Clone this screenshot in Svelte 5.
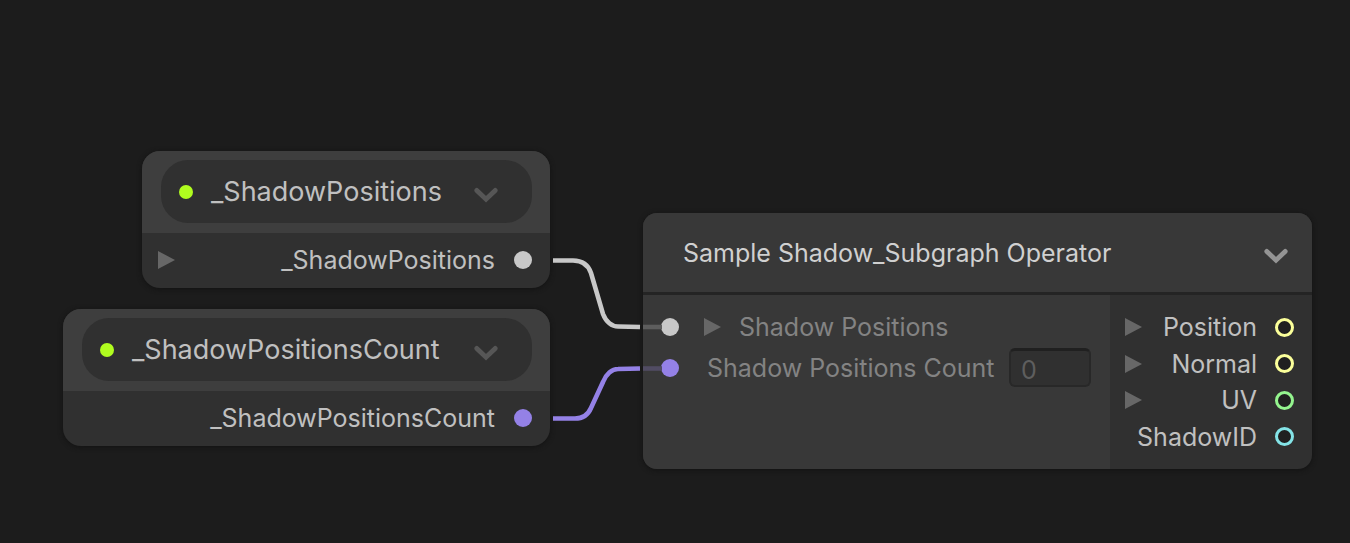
<script>
  const parameters = [
    { name: '_ShadowPositions', x: 142, y: 151, width: 408, expandable: true, color: '#c8c8c8' },
    { name: '_ShadowPositionsCount', x: 63, y: 309, width: 487, expandable: false, color: '#9481e6' }
  ];
  const outputs = [
    { name: 'Position', color: '#fbff9a', expandable: true },
    { name: 'Normal', color: '#fbff9a', expandable: true },
    { name: 'UV', color: '#94f48e', expandable: true },
    { name: 'ShadowID', color: '#84e4e7', expandable: false }
  ];
  let count = $state('0');
</script>

{#snippet expander(label)}
  <button class="expander" aria-label={label}>
    <svg width="17" height="18" viewBox="0 0 17 18"><path d="M0 0 17 9 0 18Z" fill="#676767" /></svg>
  </button>
{/snippet}

{#snippet chevron()}
  <svg width="24" height="16" viewBox="0 0 24 16">
    <path d="M2.8 3.4 12 12.2 21.2 3.4" fill="none" stroke="currentColor" stroke-width="4.8" stroke-linecap="round" />
  </svg>
{/snippet}

<main>
  {#each parameters as p}
    <section class="node parameter" style="left:{p.x}px; top:{p.y}px; width:{p.width}px">
      <header>
        <div class="pill">
          <span class="exposed"></span>
          <span class="name">{p.name}</span>
          <button class="collapse" aria-label="Collapse {p.name}">{@render chevron()}</button>
        </div>
      </header>
      <div class="port-row">
        {#if p.expandable}{@render expander('Expand ' + p.name)}{/if}
        <span class="port-name">{p.name}</span>
        <span class="port" style="background:{p.color}"></span>
      </div>
    </section>
  {/each}

  <section class="node operator">
    <header>
      <span>Sample Shadow_Subgraph Operator</span>
      <button class="collapse" aria-label="Collapse operator">{@render chevron()}</button>
    </header>
    <div class="body">
      <div class="inputs">
        <div class="input-row array">
          <span class="port light"></span>
          {@render expander('Expand Shadow Positions')}
          <span>Shadow Positions</span>
        </div>
        <div class="input-row">
          <span class="port violet"></span>
          <label for="count">Shadow Positions Count</label>
          <input id="count" type="text" bind:value={count} />
        </div>
      </div>
      <div class="outputs">
        {#each outputs as o}
          <div class="output-row">
            {#if o.expandable}{@render expander('Expand ' + o.name)}{/if}
            <span class="port-name">{o.name}</span>
            <span class="ring" style="border-color:{o.color}"></span>
          </div>
        {/each}
      </div>
    </div>
  </section>

  <svg class="wires" width="700" height="440" viewBox="0 0 700 440" fill="none" stroke-width="4.6">
    <path stroke="#c8c8c8" d="M553 260.5H573C582 260.5 588 264 591 273L603 314C606 322 612 326.5 618 326.5L640 327" />
    <path stroke="#9481e6" d="M553 418.5H575C583 418.5 588 415 591 408L603 382C606 374 612 369 618 369L640 368.5" />
    <path stroke="#5d5d5d" d="M643 327H662" />
    <path stroke="#514c63" d="M643 368.5H662" />
  </svg>
</main>

<style>
  :global(body) { margin: 0; background: #1c1c1c; }
  main {
    position: relative;
    min-height: 100vh;
    overflow: hidden;
    font: 25px/30px Inter, sans-serif;
    color: #c0c0c0;
  }
  button {
    display: flex;
    padding: 0;
    border: 0;
    background: none;
    color: inherit;
  }
  .node {
    position: absolute;
    overflow: hidden;
    box-sizing: border-box;
    background: #303030;
    box-shadow: 0 1px 5px #121212;
  }
  .parameter { border-radius: 18px; }
  .parameter header { padding: 9px 18px 10px 19px; background: #3e3e3e; }
  .pill {
    display: flex;
    align-items: center;
    height: 63px;
    padding: 0 34px 0 18px;
    border-radius: 27px;
    background: #303030;
    font-size: 27px;
  }
  .exposed {
    width: 14px;
    height: 14px;
    margin-right: 18px;
    border-radius: 50%;
    background: #b0fc1f;
  }
  .pill .collapse { margin: 6px 0 0 auto; color: #565656; }
  .port-row {
    display: flex;
    align-items: center;
    height: 54px;
    padding: 0 18px 1px 16px;
  }
  .port-name { margin-left: auto; }
  .port {
    width: 18px;
    height: 18px;
    border-radius: 50%;
    flex: none;
  }
  .port-row .port { margin-left: 19px; }
  .operator {
    left: 643px;
    top: 213px;
    width: 669px;
    border-radius: 14px;
  }
  .operator header {
    display: flex;
    align-items: center;
    justify-content: space-between;
    height: 79px;
    padding: 0 24px 0 40px;
    background: #383838;
    border-bottom: 3px solid #242424;
    color: #d0d0d0;
  }
  .operator header .collapse { margin-top: 7px; color: #949494; }
  .body { display: flex; }
  .inputs {
    flex: 1;
    padding: 11px 19px 0 18px;
    background: #383838;
    color: #838383;
  }
  .input-row {
    display: flex;
    align-items: center;
    height: 41px;
  }
  .input-row .port { margin-right: 28px; }
  .input-row.array .port { margin-right: 25px; }
  .array .expander { margin-right: 18px; }
  .light { background: #c8c8c8; }
  .violet { background: #9481e6; }
  input {
    box-sizing: border-box;
    width: 82px;
    height: 39px;
    margin-left: auto;
    padding: 3px 0 0 10px;
    border: 2px solid #282828;
    border-top: 3px solid #202020;
    border-radius: 6px;
    background: #303030;
    color: #5e5e5e;
    font: inherit;
  }
  .outputs {
    display: grid;
    grid-auto-rows: 1fr;
    box-sizing: border-box;
    width: 202px;
    min-height: 174px;
    padding: 14px 18px 14px 15px;
  }
  .output-row {
    display: flex;
    align-items: center;
  }
  .ring {
    box-sizing: border-box;
    width: 19px;
    height: 19px;
    margin-left: 18px;
    border: 3px solid;
    border-radius: 50%;
    background: #202020;
  }
  .wires { position: absolute; left: 0; top: 0; pointer-events: none; }
</style>
